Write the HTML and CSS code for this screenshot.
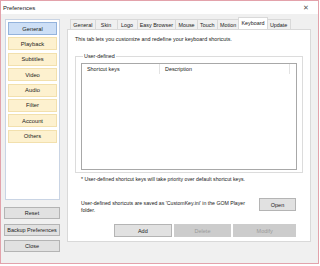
FILE: index.html
```html
<!DOCTYPE html>
<html lang="en">
<head>
  <meta charset="UTF-8">
  <title>Preferences</title>
  <link rel="stylesheet" href="styles.css">
</head>
<body>
  <div class="window">
    <div class="titlebar">
      <span class="title">Preferences</span>
      <span class="close">&#x2715;</span>
    </div>

    <div class="body">
      <div class="left-col">
        <div class="menu-box">
          <div class="menu-btn active">General</div>
          <div class="menu-btn">Playback</div>
          <div class="menu-btn">Subtitles</div>
          <div class="menu-btn">Video</div>
          <div class="menu-btn">Audio</div>
          <div class="menu-btn">Filter</div>
          <div class="menu-btn">Account</div>
          <div class="menu-btn">Others</div>
        </div>
        <div class="side-actions">
          <div class="btn">Reset</div>
          <div class="btn">Backup Preferences</div>
          <div class="btn">Close</div>
        </div>
      </div>

      <div class="right-col">
        <ul class="tabs">
          <li>General</li>
          <li class="tab-wide">Skin</li>
          <li>Logo</li>
          <li>Easy Browser</li>
          <li>Mouse</li>
          <li>Touch</li>
          <li>Motion</li>
          <li class="selected">Keyboard</li>
          <li>Update</li>
        </ul>

        <div class="panel">
          <p class="intro">This tab lets you customize and redefine your keyboard shortcuts.</p>

          <fieldset class="group">
            <legend>User-defined</legend>
            <div class="listview">
              <div class="lv-head">
                <span class="col col-keys">Shortcut keys</span>
                <span class="col col-desc">Description</span>
              </div>
            </div>
          </fieldset>

          <p class="note">* User-defined shortcut keys will take priority over default shortcut keys.</p>

          <div class="save-row">
            <p class="save-text">User-defined shortcuts are saved as 'CustomKey.ini' in the GOM Player folder.</p>
            <div class="btn open-btn">Open</div>
          </div>

          <div class="bottom-actions">
            <div class="btn">Add</div>
            <div class="btn disabled">Delete</div>
            <div class="btn disabled wide">Modify</div>
          </div>
        </div>
      </div>
    </div>
  </div>
</body>
</html>
```

FILE: styles.css
```css
* {
  box-sizing: border-box;
  margin: 0;
  padding: 0;
}

body {
  background: #fff;
  font-family: 'Liberation Sans', Arial, sans-serif;
  font-size: 5.5px;
  color: #1a1a1a;
}

.window {
  width: 319px;
  height: 264px;
  border: 1px solid #e3a2ab;
  background: #f0f0f0;
  display: flex;
  flex-direction: column;
}

.titlebar {
  height: 13px;
  background: #fff;
  display: flex;
  align-items: center;
  justify-content: space-between;
  padding: 0 9px 0 2px;
}

.title {
  font-size: 6px;
  color: #222;
}

.close {
  font-size: 7px;
  color: #555;
}

.body {
  flex: 1;
  display: flex;
  padding: 5px 7px 0 3px;
  gap: 7px;
}

/* left column */
.left-col {
  width: 56px;
  display: flex;
  flex-direction: column;
}

.menu-box {
  height: 181px;
  margin-left: 1px;
  background: #fff;
  border: 1px solid #c9d4e4;
  padding: 2px 2px;
  display: flex;
  flex-direction: column;
  gap: 2.4px;
}

.menu-btn {
  height: 13px;
  background: #fdf1cf;
  border: 1px solid #f2e0ad;
  display: flex;
  align-items: center;
  justify-content: center;
  font-size: 5.8px;
  color: #222;
}

.menu-btn.active {
  background: #cddff6;
  border-color: #94b3dc;
}

.side-actions {
  margin-top: 7px;
  display: flex;
  flex-direction: column;
  gap: 4.5px;
}

.btn {
  height: 12px;
  background: #e1e1e1;
  border: 1px solid #b4b4b4;
  display: flex;
  align-items: center;
  justify-content: center;
  font-size: 5.5px;
  color: #222;
}

.btn.disabled {
  background: #cccccc;
  border-color: #cccccc;
  color: #9a9a9a;
}

/* right column */
.right-col {
  flex: 1;
  display: flex;
  flex-direction: column;
}

.tabs {
  list-style: none;
  display: flex;
  height: 10px;
  padding-left: 3px;
  position: relative;
  z-index: 1;
}

.tabs li {
  min-width: 21px;
  height: 10px;
  padding: 0 2.2px;
  border: 1px solid #d9d9d9;
  border-bottom: none;
  margin-right: -1px;
  background: #f0f0f0;
  display: flex;
  align-items: center;
  justify-content: center;
  font-size: 5.4px;
  color: #222;
  white-space: nowrap;
}

.tabs li.tab-wide {
  min-width: 23px;
}

.tabs li.selected {
  background: #fff;
  height: 12px;
  margin-top: -2px;
  margin-bottom: -1px;
  position: relative;
  padding-bottom: 1px;
}

.panel {
  width: 244px;
  height: 213px;
  background: #fff;
  border: 1px solid #d9d9d9;
  padding: 5px 7px 0;
}

.intro {
  line-height: 8px;
  font-size: 5.4px;
}

.group {
  margin-top: 10px;
  height: 120px;
  border: 1px solid #dcdcdc;
  padding: 0 5px;
}

.group legend {
  margin-left: 2px;
  padding: 0 1px;
  font-size: 5.4px;
  line-height: 6px;
}

.listview {
  margin-top: 4px;
  height: 107px;
  border: 1px solid #a8a8a8;
  background: #fff;
}

.lv-head {
  display: flex;
  height: 10px;
}

.col {
  display: flex;
  align-items: center;
  padding-left: 5px;
  font-size: 5.4px;
  border-right: 1px solid #e3e3e3;
}

.col-keys {
  width: 78px;
}

.col-desc {
  width: 130px;
}

.note {
  margin-top: 3px;
  padding-left: 6px;
  font-size: 5.2px;
  line-height: 6px;
}

.save-row {
  margin-top: 18px;
  display: flex;
  align-items: flex-start;
  padding-left: 6px;
  padding-right: 7px;
  gap: 8px;
}

.save-text {
  flex: 1;
  font-size: 5.2px;
  line-height: 6.5px;
}

.open-btn {
  width: 37px;
  height: 13px;
  margin-top: -2px;
}

.bottom-actions {
  margin-top: 11px;
  margin-left: 39px;
  margin-right: 7px;
  display: flex;
  gap: 2px;
}

.bottom-actions .btn {
  width: 58px;
  height: 13px;
}

.bottom-actions .btn.wide {
  width: 63px;
}
```
